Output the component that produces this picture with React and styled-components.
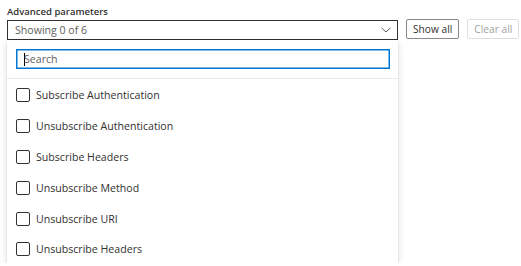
import React from "react";
import styled, { createGlobalStyle } from "styled-components";

const Global = createGlobalStyle`
  html, body { margin: 0; padding: 0; background: #fff; }
  body { font-family: "Open Sans", "Noto Sans", sans-serif; color: #323130; }
`;

const Page = styled.div`
  padding: 4px 7px 0 7px;
`;

const Label = styled.div`
  font-size: 9.5px;
  font-weight: 600;
  line-height: 16px;
  color: #323130;
`;

const Controls = styled.div`
  display: flex;
  align-items: flex-start;
  gap: 8px;
`;

const Dropdown = styled.div`
  flex: 0 0 391px;
  display: flex;
  flex-direction: column;
`;

const Field = styled.div`
  box-sizing: border-box;
  height: 20px;
  border: 1px solid #323130;
  display: flex;
  align-items: center;
  justify-content: space-between;
  padding: 0 6px 0 7px;
  font-size: 10.6px;
  color: #605e5c;
`;

const Chevron = () => (
  <svg width="10" height="6" viewBox="0 0 10 6" style={{ display: "block" }}>
    <polyline points="0.5,0.8 5,5 9.5,0.8" fill="none" stroke="#605e5c" strokeWidth="1" />
  </svg>
);

const Button = styled.button`
  box-sizing: border-box;
  flex: 0 0 auto;
  white-space: nowrap;
  height: 20px;
  margin-top: -1px;
  padding: 0 6px;
  border-radius: 2px;
  background: #fff;
  font-family: inherit;
  font-size: 10.2px;
  border: 1px solid ${(p) => (p.disabled ? "#e1dfdd" : "#8a8886")};
  color: ${(p) => (p.disabled ? "#a19f9d" : "#323130")};
`;

const Menu = styled.div`
  background: #fff;
  box-shadow: 0 3.2px 7.2px rgba(0, 0, 0, 0.132), 0 0.6px 1.8px rgba(0, 0, 0, 0.108);
`;

const SearchWrap = styled.div`
  padding: 9px 8px 9px 9px;
  border-bottom: 1px solid #edebe9;
`;

const SearchBox = styled.div`
  box-sizing: border-box;
  height: 20px;
  border: 1px solid #0078d4;
  box-shadow: inset 0 0 0 0.5px #0078d4;
  display: flex;
  align-items: center;
  padding-left: 7px;
  font-size: 10.6px;
  color: #605e5c;
`;

const Caret = styled.span`
  display: inline-block;
  width: 1px;
  height: 13px;
  background: #000;
  margin-right: -1px;
`;

const List = styled.div``;

const Row = styled.div`
  height: 31px;
  display: flex;
  align-items: center;
  padding-left: 9px;
  font-size: 10.6px;
  color: #323130;
  &:last-child {
    height: 29px;
  }
`;

const Box = styled.span`
  box-sizing: border-box;
  flex: 0 0 auto;
  width: 14px;
  height: 14px;
  border: 1px solid #323130;
  border-radius: 2px;
  margin-right: 6px;
`;

const items = [
  "Subscribe Authentication",
  "Unsubscribe Authentication",
  "Subscribe Headers",
  "Unsubscribe Method",
  "Unsubscribe URI",
  "Unsubscribe Headers",
];

export default function App() {
  return (
    <Page>
      <Global />
      <Label>Advanced parameters</Label>
      <Controls>
        <Dropdown>
          <Field>
            <span>Showing 0 of 6</span>
            <Chevron />
          </Field>
          <Menu>
            <SearchWrap>
              <SearchBox>
                <Caret />
                <span>Search</span>
              </SearchBox>
            </SearchWrap>
            <List>
              {items.map((t) => (
                <Row key={t}>
                  <Box />
                  {t}
                </Row>
              ))}
            </List>
          </Menu>
        </Dropdown>
        <Button>Show all</Button>
        <Button disabled>Clear all</Button>
      </Controls>
    </Page>
  );
}
